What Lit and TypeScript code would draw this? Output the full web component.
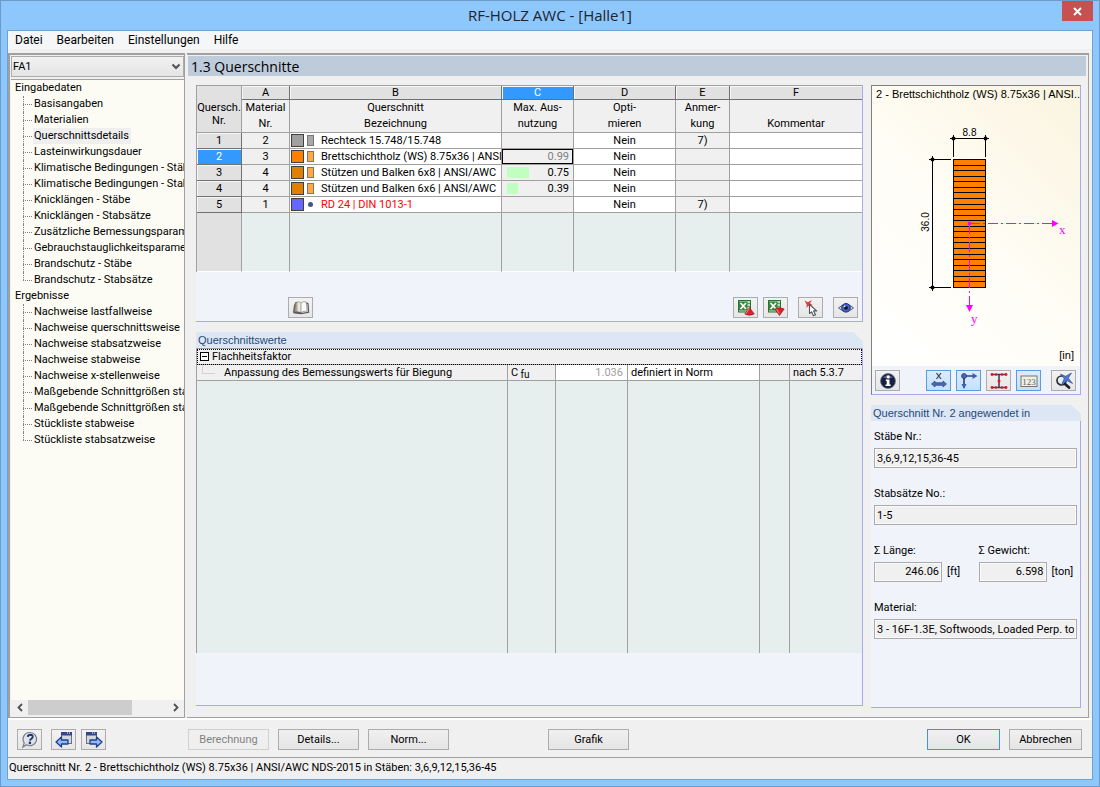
import { LitElement, html, css, svg, nothing } from "lit";
import { customElement, state } from "lit/decorators.js";
import { classMap } from "lit/directives/class-map.js";
import { styleMap } from "lit/directives/style-map.js";

const MENU = ["Datei", "Bearbeiten", "Einstellungen", "Hilfe"];

const TREE = [
  {
    title: "Eingabedaten",
    items: [
      "Basisangaben",
      "Materialien",
      "Querschnittsdetails",
      "Lasteinwirkungsdauer",
      "Klimatische Bedingungen - Stäbe",
      "Klimatische Bedingungen - Stabsätze",
      "Knicklängen - Stäbe",
      "Knicklängen - Stabsätze",
      "Zusätzliche Bemessungsparameter",
      "Gebrauchstauglichkeitsparameter",
      "Brandschutz - Stäbe",
      "Brandschutz - Stabsätze",
    ],
  },
  {
    title: "Ergebnisse",
    items: [
      "Nachweise lastfallweise",
      "Nachweise querschnittsweise",
      "Nachweise stabsatzweise",
      "Nachweise stabweise",
      "Nachweise x-stellenweise",
      "Maßgebende Schnittgrößen stabweise",
      "Maßgebende Schnittgrößen stabsatzweise",
      "Stückliste stabweise",
      "Stückliste stabsatzweise",
    ],
  },
];

const COLUMNS = [
  { letter: "A", lines: ["Material", "Nr."] },
  { letter: "B", lines: ["Querschnitt", "Bezeichnung"] },
  { letter: "C", lines: ["Max. Aus-", "nutzung"] },
  { letter: "D", lines: ["Opti-", "mieren"] },
  { letter: "E", lines: ["Anmer-", "kung"] },
  { letter: "F", lines: ["", "Kommentar"] },
];

interface Section {
  material: number;
  color: string;
  shape: "grey" | "wood" | "round";
  name: string;
  ratio?: number;
  note?: string;
  invalid?: boolean;
}

const SECTIONS: Section[] = [
  { material: 2, color: "#a0a0a0", shape: "grey", name: "Rechteck 15.748/15.748", note: "7)" },
  { material: 3, color: "#ff8000", shape: "wood", name: "Brettschichtholz (WS) 8.75x36 | ANSI", ratio: 0.99 },
  { material: 4, color: "#e08000", shape: "wood", name: "Stützen und Balken 6x8 | ANSI/AWC", ratio: 0.75 },
  { material: 4, color: "#e08000", shape: "wood", name: "Stützen und Balken 6x6 | ANSI/AWC", ratio: 0.39 },
  { material: 1, color: "#6666ff", shape: "round", name: "RD 24 | DIN 1013-1", note: "7)", invalid: true },
];

const icon = (body: unknown) => html`<svg class="icon" width="18" height="18" viewBox="0 0 18 18" aria-hidden="true">${body}</svg>`;

const sheet = svg`<rect x="1.500" y="1.500" width="12" height="11.500" fill="#b9dcb4" stroke="#2f6f33"/>
  <path d="M9 4.500h4M9 7.500h4M9 10.500h4" stroke="#5f9a63"/>
  <rect x="2" y="2.500" width="8.500" height="9" fill="#3a8442"/>
  <path d="M3.500 4l5.500 6M9 4l-5.500 6" stroke="#fff" stroke-width="1.700"/>`;

const ICONS = {
  book: icon(svg`<path d="M2 6l1.500-3 4.500 0 1.500 1.500v10l-7.500-.5-1-1z" fill="#6d6558"/>
    <path d="M3.500 4c1.700-1.500 4-1.500 5.300.3v9c-1.600-1-4-1-6-.3z" fill="#a9a49a" stroke="#77705f" stroke-width=".6"/>
    <path d="M5.500 3.500c1.300-.6 2.600-.2 3.400.8v9c-1-.7-2-1-3.400-.9z" fill="#e9e7e0"/>
    <path d="M9 4.300c1.500-1.800 3.500-2 5.300-1.200l.8 9.300c-2-.4-4.300 0-6.100 1.100z" fill="#fbfaf6" stroke="#8b8477" stroke-width=".7"/>
    <path d="M14.700 3.800l1.300 1 .6 8.500-7.600 1.400-7.500-1" fill="none" stroke="#4c5668" stroke-width="1.200"/>`),
  excelUp: icon(svg`${sheet}<path d="M12.500 8.500l4.700 6.500q-4.700 2.600-9.400 0z" fill="#e0202a" stroke="#8e0e14" stroke-width=".6"/>
    <path d="M12.300 9.500l-3.300 5" stroke="#ff8a8a"/>`),
  excelDown: icon(svg`${sheet}<path d="M7.800 10q4.700-2.600 9.400 0l-4.700 6.500z" fill="#e0202a" stroke="#8e0e14" stroke-width=".6"/>
    <path d="M9.500 10.200l2.800 4.200" stroke="#ff8a8a"/>`),
  pick: icon(svg`<path d="M2.500 1.500l3.300 1.800L10 1 8 4.300l2.800 2-3.800.2L4.500 8.800l.2-3z" fill="#e23a3a"/>
    <path d="M7.500 5.500v9l2-1.700 1.900 4 2.100-1-1.900-3.900h3.100z" fill="#fdfdfd" stroke="#50555c" stroke-width="1.100" stroke-linejoin="round"/>`),
  eye: icon(svg`<path d="M1.500 9Q9 1.500 16.500 9 9 16 1.500 9z" fill="#c9d1ea" stroke="#59617c"/>
    <circle cx="9" cy="8.800" r="4.300" fill="#4664c4" stroke="#1f2f73"/>
    <circle cx="9" cy="8.800" r="1.900" fill="#0c1230"/><circle cx="7.600" cy="7.300" r=".9" fill="#e9eeff"/>`),
  info: icon(svg`<circle cx="9" cy="9" r="7.500" fill="#17203f" stroke="#6b7696" stroke-width=".8"/>
    <path d="M4 5.500q5-4.500 10 0-5 2-10 0z" fill="#7d8bb8" opacity=".6"/>
    <circle cx="9.200" cy="4.900" r="1.600" fill="#fff"/><path d="M6.800 7.500h3.700v5h1.200v1.500H6.500v-1.500h1.200V9h-.9z" fill="#fff"/>`),
  width: icon(svg`<path d="M6.500 1l4.500 6M11 1L6.500 7" stroke="#333b4d" stroke-width="1.200"/>
    <path d="M1.500 12l3.500-3v1.700h8V9l3.500 3-3.500 3v-1.700H5V15z" fill="#4a68b8" stroke="#2b3f7c" stroke-width=".7"/>`),
  axes: icon(svg`<path d="M4 16V4h11" fill="none" stroke="#2e4481" stroke-width="1.700"/>
    <path d="M12.500 1L17.500 4l-5 3zM1.500 12h5L4 17z" fill="#3f5fae"/><circle cx="4" cy="4" r="2.500" fill="#4a68b8" stroke="#22346b" stroke-width=".7"/>`),
  beam: icon(svg`<path d="M2 2.500h14M2 15.500h14M9 2.500v13" stroke="#34395e" stroke-width="1.500"/>
    <g fill="#e8141c"><circle cx="2" cy="2.500" r="1.400"/><circle cx="6" cy="2.500" r="1.200"/><circle cx="12" cy="2.500" r="1.200"/><circle cx="16" cy="2.500" r="1.400"/>
    <circle cx="9" cy="9" r="1.500"/><circle cx="2" cy="15.500" r="1.400"/><circle cx="6" cy="15.500" r="1.200"/><circle cx="12" cy="15.500" r="1.200"/><circle cx="16" cy="15.500" r="1.400"/></g>`),
  numbers: icon(svg`<rect x="1" y="4" width="16" height="10.500" fill="#eef0e6" stroke="#73786f"/>
    <text x="9" y="12.500" text-anchor="middle" font-family="Liberation Serif, serif" font-size="9" fill="#5c6158">123</text>`),
  findView: icon(svg`<circle cx="6.500" cy="8.500" r="4.500" fill="#e8eef5" stroke="#2c3138" stroke-width="1.700"/>
    <path d="M10 12l4 3.500" stroke="#1d2026" stroke-width="2.800" stroke-linecap="round"/>
    <path d="M5.500 2l5 2.300L16.500 1 13.300 6l4.200 5.500-5.500-2.800-5.500 4 2.700-6z" fill="#4f79cf" stroke="#28478f" stroke-width=".6"/>`),
  help: icon(svg`<path d="M9 1.500a6.600 6.600 0 1 1-3.500 12.200L2 16l1.200-4.200A6.600 6.600 0 0 1 9 1.500z" fill="#dfe2e8" stroke="#777c84" stroke-width="1.200"/>
    <path d="M6.800 5.800q.3-2 2.700-2 2.300.1 2.200 2.100-.2 1.300-1.600 2.100-.9.500-1 1.700" fill="none" stroke="#27366f" stroke-width="2"/><circle cx="8.900" cy="11.900" r="1.300" fill="#27366f"/>`),
  back: icon(svg`<rect x="6.500" y="1.500" width="10" height="11" fill="#d3d8e0" stroke="#6c727c"/><rect x="6" y="1" width="11" height="3.500" fill="#35458a"/>
    <path d="M12 2h4" stroke="#fff" stroke-dasharray="1 1"/>
    <path d="M1 11l5.500-5v3h6.500v4H6.500v3z" fill="#8fb9f0" stroke="#1e3f8f" stroke-width="1.300" stroke-linejoin="round"/>`),
  forward: icon(svg`<rect x="1.500" y="1.500" width="10" height="11" fill="#d3d8e0" stroke="#6c727c"/><rect x="1" y="1" width="11" height="3.500" fill="#35458a"/>
    <path d="M7 2h4" stroke="#fff" stroke-dasharray="1 1"/>
    <path d="M17 11l-5.500-5v3H5v4h6.500v3z" fill="#8fb9f0" stroke="#1e3f8f" stroke-width="1.300" stroke-linejoin="round"/>`),
};

const LAYERS = 23;

@customElement("section-preview")
export class SectionPreview extends LitElement {
  static styles = css`
    :host {
      display: block;
      position: relative;
      height: 280px;
      overflow: hidden;
      background: linear-gradient(225deg, #faf4df 0%, #fffdf6 55%, #ffffff 100%);
    }
    svg {
      display: block;
      font-family: "Liberation Sans", Arial, sans-serif;
    }
    .caption {
      position: absolute;
      top: 0;
      left: 4px;
      white-space: nowrap;
      font: 11px/16px "Liberation Sans", Arial, sans-serif;
      color: #000;
    }
    .dim {
      stroke: #000;
      fill: none;
      shape-rendering: crispEdges;
    }
    .value {
      font-size: 10px;
      text-anchor: middle;
    }
    .axis {
      stroke: #f0f;
      fill: none;
      stroke-dasharray: 10 3 2 3;
      shape-rendering: crispEdges;
    }
    .axis-name {
      font: 13px "Liberation Serif", serif;
      fill: #f0f;
    }
    .unit {
      font-size: 11px;
    }
  `;

  render() {
    const step = 128 / LAYERS;
    return html`
      <div class="caption">2 - Brettschichtholz (WS) 8.75x36 | ANSI...</div>
      <svg width="208" height="280" viewBox="0 0 208 280" role="img" aria-label="Querschnitt 8.8 x 36.0 in">
        <rect x="81.500" y="73.500" width="32" height="128" fill="#ff8000" stroke="#000" shape-rendering="crispEdges" />
        ${Array.from({ length: LAYERS - 1 }, (_, i) => {
          const y = Math.round(73 + step * (i + 1)) + 0.5;
          return svg`<path class="dim" d="M81 ${y}h33" />`;
        })}
        <path class="dim" d="M78 52.500h39M81.500 49v22M113.500 49v22" />
        <path class="dim" d="M60.500 70v135M57 73.500h22M57 201.500h22" />
        <g fill="#000">
          <circle cx="81.500" cy="52.500" r="2" /><circle cx="113.500" cy="52.500" r="2" />
          <circle cx="60.500" cy="73.500" r="2" /><circle cx="60.500" cy="201.500" r="2" />
        </g>
        <text class="value" x="97.500" y="50">8.8</text>
        <text class="value" transform="translate(57 136) rotate(-90)">36.0</text>
        <path class="axis" d="M97.500 137.500h84" />
        <path class="axis" d="M97.500 137.500v81" />
        <rect x="96" y="136" width="3" height="3" fill="#f0f" />
        <path d="M180 134l6.500 3.500-6.500 3.500z" fill="#f0f" />
        <path d="M94 219h7l-3.500 7z" fill="#f0f" />
        <text class="axis-name" x="187" y="148">x</text>
        <text class="axis-name" x="99" y="237">y</text>
        <text class="unit" x="202" y="273" text-anchor="end">[in]</text>
      </svg>
    `;
  }
}

@customElement("app-root")
export class AppRoot extends LitElement {
  @state() private selected = 1;
  @state() private page = "Querschnittsdetails";

  static styles = css`
    :host {
      --ui: Roboto, "Liberation Sans", sans-serif;
      --plain: "Liberation Sans", Arial, sans-serif;
      --shell: "Open Sans", "Noto Sans", sans-serif;
      --line: #a0a0a0;
      --face: #f0f0f0;
      --panel: #f0f3fa;
      --edge: #a8a8ee;
      display: flex;
      flex-direction: column;
      box-sizing: border-box;
      height: 100vh;
      border: 1px solid #6c9bc8;
      padding: 0 6px 6px;
      background: #8dc7fb;
      color: #000;
      font: 11px/16px var(--ui);
    }
    * {
      box-sizing: border-box;
    }
    button,
    select,
    input {
      font: inherit;
      color: inherit;
      margin: 0;
      border-radius: 0;
    }
    .titlebar {
      position: relative;
      flex: none;
      height: 29px;
      text-align: center;
      font: 15px/29px var(--shell);
      color: #1c2430;
    }
    .close {
      position: absolute;
      top: 0;
      right: 0;
      width: 31px;
      height: 20px;
      padding: 0;
      border: 0;
      background: #c75050;
      display: grid;
      place-items: center;
    }
    .client {
      flex: 1;
      min-height: 0;
      display: flex;
      flex-direction: column;
      border: 1px solid #6fa3d3;
      background: var(--face);
    }
    .menu {
      flex: none;
      display: flex;
      gap: 14px;
      height: 22px;
      padding: 0 7px;
      background: #f5f6f7;
      border-bottom: 4px solid var(--face);
      font: 12px/19px var(--ui);
    }
    .menu button {
      padding: 0;
      border: 0;
      background: none;
    }
    .workspace {
      flex: 1;
      min-height: 0;
      display: flex;
      gap: 2px;
      padding-right: 3px;
    }

    /* Navigator */
    .navigator {
      flex: none;
      width: 177px;
      display: flex;
      flex-direction: column;
      padding: 1px 0 0 1px;
      border: 1px solid var(--line);
      border-width: 2px 1px 1px 2px;
      background: var(--face);
    }
    .case {
      position: relative;
      flex: none;
      height: 24px;
      border-bottom: 1px solid var(--line);
    }
    .case select {
      appearance: none;
      width: 100%;
      height: 21px;
      padding: 0 1px;
      border: 1px solid #acacac;
      background: linear-gradient(#f2f2f2, #e4e4e4);
    }
    .case svg {
      position: absolute;
      right: 3px;
      top: 7px;
      pointer-events: none;
    }
    .tree {
      flex: 1;
      min-height: 0;
      overflow: hidden;
      background: #fcfcf4;
      white-space: nowrap;
    }
    .tree ul {
      list-style: none;
      margin: 0;
      padding: 0;
    }
    .root {
      padding-left: 4px;
    }
    .branch {
      position: relative;
      padding-left: 22px;
    }
    .branch::before {
      content: "";
      position: absolute;
      left: 12px;
      top: 0;
      height: 16px;
      border-left: 1px dotted #808080;
    }
    .branch:last-child::before {
      height: 8px;
    }
    .branch::after {
      content: "";
      position: absolute;
      left: 12px;
      top: 8px;
      width: 9px;
      border-top: 1px dotted #808080;
    }
    .branch a {
      display: inline-block;
      padding: 0 2px 0 1px;
      color: inherit;
      text-decoration: none;
    }
    .branch .current {
      background: #efefef;
    }
    .scroll {
      flex: none;
      display: flex;
      align-items: flex-start;
      height: 17px;
      background: var(--face);
    }
    .scroll .step {
      width: 17px;
      height: 15px;
      padding: 0;
      border: 0;
      background: none;
      display: grid;
      place-items: center;
    }
    .scroll .track {
      flex: 1;
      height: 15px;
    }
    .scroll .thumb {
      width: 75%;
      height: 15px;
      background: #cdcdcd;
    }

    /* Main area */
    .main {
      flex: 1;
      min-width: 0;
      display: flex;
      flex-direction: column;
      border-top: 2px solid var(--line);
      border-right: 1px solid var(--line);
      border-bottom: 1px solid var(--line);
    }
    .main h1 {
      flex: none;
      margin: 1px 2px 0 1px;
      height: 20px;
      padding-left: 3px;
      background: #becbda;
      font: 14px/21px var(--shell);
    }
    .split {
      flex: 1;
      min-height: 0;
      display: flex;
      gap: 8px;
      padding: 9px 7px 9px 9px;
    }
    .column {
      display: flex;
      flex-direction: column;
      gap: 10px;
    }
    .wide {
      flex: 1;
      min-width: 0;
      padding-bottom: 2px;
    }
    .side {
      flex: none;
      width: 210px;
    }
    .panel {
      display: flex;
      flex-direction: column;
      border-right: 1px solid var(--edge);
      border-bottom: 1px solid var(--edge);
      background: var(--panel);
    }
    .grow {
      flex: 1;
      min-height: 0;
    }
    .panel h2 {
      flex: none;
      margin: 0 -1px 0 0;
      height: 16px;
      padding-left: 2px;
      background: linear-gradient(45deg, #dde6f4 calc(100% - 7px), var(--face) calc(100% - 7px));
      color: #1f4a78;
      font: 11px/16px var(--plain);
    }

    table {
      width: 100%;
      table-layout: fixed;
      border-collapse: separate;
      border-spacing: 0;
      border-left: 1px solid var(--line);
      border-top: 1px solid var(--line);
    }
    th,
    td {
      height: 16px;
      padding: 0;
      border-right: 1px solid var(--line);
      border-bottom: 1px solid var(--line);
      background: var(--face);
      font-weight: normal;
      line-height: 15px;
      text-align: center;
      white-space: nowrap;
      overflow: hidden;
    }
    th:last-child,
    td:last-child {
      border-right: 0;
    }
    .letter {
      height: 14px;
      line-height: 13px;
      background: #e1e1e1;
      border-color: #707070;
      box-shadow: inset 1px 1px #f7f7f7;
    }
    .corner {
      background: #e1e1e1;
      line-height: 13px;
      padding-top: 9px;
    }
    .label {
      height: 33px;
      line-height: 16px;
    }
    .label span {
      display: block;
      min-height: 16px;
    }
    .number {
      background: #e1e1e1;
      border-color: #707070;
      box-shadow: inset 1px 1px #f7f7f7;
      cursor: pointer;
    }
    .letter.on,
    .number.on {
      background: #3399ff;
      color: #fff;
    }
    .open {
      background: #fff;
    }
    .section {
      background: #fff;
      text-align: left;
    }
    .section-inner {
      display: flex;
      align-items: center;
      height: 15px;
      padding-left: 1px;
    }
    .swatch {
      flex: none;
      width: 13px;
      height: 13px;
      border: 1px solid #404040;
    }
    .glyph {
      flex: none;
      width: 17px;
      height: 15px;
    }
    .invalid {
      color: #f00;
    }
    .ratio {
      text-align: right;
    }
    .ratio-inner {
      display: flex;
      align-items: center;
      height: 15px;
      padding: 0 4px 0 5px;
    }
    .bar {
      height: 11px;
      background: #c0ffc0;
    }
    .ratio-inner span:last-child {
      margin-left: auto;
    }
    .focus .ratio-inner {
      outline: 1px solid #000;
      outline-offset: -1px;
      color: #808080;
    }
    .filler td {
      height: 59px;
      background: #e7eeee;
      border-bottom-color: #fff;
    }
    .filler .stub {
      background: #e1e1e1;
    }
    .tools {
      flex: none;
      display: flex;
      align-items: flex-start;
      height: 49px;
      padding: 25px 4px 0 92px;
    }
    .tool {
      flex: none;
      width: 25px;
      height: 21px;
      padding: 0;
      border: 1px solid #acacac;
      background: linear-gradient(#f2f2f2, #e6e6e6);
      display: grid;
      place-items: center;
    }
    .tool.pressed {
      border-color: #569de5;
      background: linear-gradient(#dcecfc, #c4e0fc);
    }
    .icon {
      display: block;
    }
    .push {
      margin-left: auto;
    }
    .gap-s {
      margin-left: 5px;
    }
    .gap-m {
      margin-left: 10px;
    }

    /* Property grid */
    .property-box {
      flex: 1;
      min-height: 0;
      display: flex;
      padding-bottom: 52px;
    }
    .group {
      text-align: left;
      padding-left: 3px;
      outline: 1px dotted #000;
      outline-offset: -1px;
    }
    .group-inner {
      display: flex;
      align-items: center;
      gap: 3px;
      height: 15px;
    }
    .left {
      text-align: left;
      padding-left: 3px;
    }
    .named {
      display: flex;
      gap: 9px;
      height: 15px;
      padding-left: 5px;
      text-align: left;
    }
    .named::before {
      content: "";
      width: 12px;
      height: 8px;
      border-left: 1px solid #d4d4d4;
      border-bottom: 1px solid #d4d4d4;
    }
    sub {
      font-size: 10px;
      line-height: 1px;
      vertical-align: -2px;
    }
    .muted {
      color: #a0a0a0;
      text-align: right;
      padding-right: 4px;
    }
    .rest td {
      height: auto;
      background: #e7eeee;
      border-bottom: 0;
    }

    /* Side column */
    .preview {
      border-top: 1px solid #808080;
      border-left: 1px solid #808080;
    }
    .preview-tools {
      display: flex;
      height: 28px;
      padding: 4px 4px 0 3px;
    }
    .form {
      display: flex;
      flex-direction: column;
      gap: 18px;
      padding: 8px 3px 0 3px;
    }
    .field {
      display: flex;
      flex-direction: column;
      gap: 3px;
    }
    .pair {
      display: grid;
      grid-template-columns: 1fr 1fr;
      gap: 6px;
    }
    .with-unit {
      display: flex;
      gap: 5px;
      line-height: 20px;
    }
    .field input {
      width: 100%;
      height: 20px;
      padding: 0 2px;
      border: 1px solid #ababab;
      background: var(--face);
      box-shadow: inset 0 0 0 1px #fafafa;
      outline: 0;
    }
    .with-unit input {
      width: 68px;
      text-align: right;
    }

    /* Command row and status line */
    .commands {
      flex: none;
      display: flex;
      align-items: center;
      height: 39px;
      padding: 2px 10px 0 9px;
      border-top: 2px solid #fff;
    }
    .command {
      width: 81px;
      height: 21px;
      padding: 0;
      border: 1px solid #acacac;
      background: linear-gradient(#f0f0f0, #e5e5e5);
      margin-left: 9px;
    }
    .command:disabled {
      border-color: #d0d0d0;
      background: #efefef;
      color: #838383;
    }
    .command.first {
      margin-left: 82px;
    }
    .command.apart {
      margin-left: 99px;
    }
    .command.narrow {
      width: 73px;
    }
    .command.default {
      margin-left: auto;
      border-color: #3c94ee;
    }
    .help {
      margin-right: 9px;
    }
    .status {
      flex: none;
      height: 22px;
      padding-left: 1px;
      border-top: 1px solid var(--line);
      line-height: 20px;
      white-space: nowrap;
      overflow: hidden;
    }
  `;

  private renderNavigator() {
    return html`
      <nav class="navigator" aria-label="Navigator">
        <div class="case">
          <select aria-label="Bemessungsfall"><option>FA1</option></select>
          <svg width="10" height="8" viewBox="0 0 10 8" aria-hidden="true">
            <path d="M1.500 1.500L5 5l3.500-3.500" fill="none" stroke="#505050" stroke-width="2" />
          </svg>
        </div>
        <div class="tree">
          ${TREE.map(
            (group) => html`
              <div class="root">${group.title}</div>
              <ul>
                ${group.items.map(
                  (item) => html`<li class="branch">
                    <a href="#" class=${classMap({ current: item === this.page })} @click=${(e: Event) => this.open(e, item)}>${item}</a>
                  </li>`
                )}
              </ul>
            `
          )}
        </div>
        <div class="scroll">
          <button class="step" aria-label="Nach links">
            <svg width="6" height="9" viewBox="0 0 6 9"><path d="M5 1L1.500 4.500 5 8" fill="none" stroke="#505050" stroke-width="1.800" /></svg>
          </button>
          <div class="track"><div class="thumb"></div></div>
          <button class="step" aria-label="Nach rechts">
            <svg width="6" height="9" viewBox="0 0 6 9"><path d="M1 1l3.500 3.500L1 8" fill="none" stroke="#505050" stroke-width="1.800" /></svg>
          </button>
        </div>
      </nav>
    `;
  }

  private open(event: Event, item: string) {
    event.preventDefault();
    this.page = item;
  }

  private renderGlyph(shape: Section["shape"]) {
    const body =
      shape === "round"
        ? svg`<circle cx="6.500" cy="7.500" r="2.500" fill="#44558a" />`
        : svg`<rect x="3.500" y="2.500" width="6" height="10" fill=${shape === "grey" ? "#a8a8a8" : "#ffaa40"} stroke="#777" />`;
    return html`<svg class="glyph" viewBox="0 0 17 15" aria-hidden="true">${body}</svg>`;
  }

  private renderSections() {
    return html`
      <table>
        <colgroup>
          <col style="width:45px" /><col style="width:48px" /><col style="width:212px" /><col style="width:72px" />
          <col style="width:102px" /><col style="width:54px" /><col />
        </colgroup>
        <thead>
          <tr>
            <th class="corner" rowspan="2">Quersch.<br />Nr.</th>
            ${COLUMNS.map((c) => html`<th class=${classMap({ letter: true, on: c.letter === "C" })}>${c.letter}</th>`)}
          </tr>
          <tr>
            ${COLUMNS.map((c) => html`<th class="label">${c.lines.map((l) => html`<span>${l}</span>`)}</th>`)}
          </tr>
        </thead>
        <tbody>
          ${SECTIONS.map((s, i) => {
            const on = i === this.selected;
            return html`<tr>
              <th class=${classMap({ number: true, on })} @click=${() => (this.selected = i)}>${i + 1}</th>
              <td>${s.material}</td>
              <td class="section">
                <div class="section-inner">
                  <span class="swatch" style=${styleMap({ background: s.color })}></span>
                  ${this.renderGlyph(s.shape)}
                  <span class=${classMap({ invalid: !!s.invalid })}>${s.name}</span>
                </div>
              </td>
              <td class=${classMap({ ratio: true, focus: on })}>
                <div class="ratio-inner">
                  ${s.ratio !== undefined && !on
                    ? html`<span class="bar" style=${styleMap({ width: `${Math.round(s.ratio * 29)}px` })}></span>`
                    : nothing}
                  <span>${s.ratio ?? ""}</span>
                </div>
              </td>
              <td class="open">Nein</td>
              <td>${s.note ?? ""}</td>
              <td class="open"></td>
            </tr>`;
          })}
          <tr class="filler">
            <td class="stub"></td>
            ${COLUMNS.map(() => html`<td></td>`)}
          </tr>
        </tbody>
      </table>
    `;
  }

  private renderProperties() {
    return html`
      <div class="property-box">
        <table>
          <colgroup>
            <col /><col style="width:48px" /><col style="width:72px" /><col style="width:132px" />
            <col style="width:30px" /><col style="width:72px" />
          </colgroup>
          <tbody>
            <tr>
              <th class="group" colspan="6">
                <div class="group-inner">
                  <svg width="9" height="9" viewBox="0 0 9 9" shape-rendering="crispEdges" aria-hidden="true">
                    <rect x=".5" y=".5" width="8" height="8" fill="#fff" stroke="#000" />
                    <path d="M2 4.500h5" stroke="#000" />
                  </svg>
                  Flachheitsfaktor
                </div>
              </th>
            </tr>
            <tr>
              <td><div class="named">Anpassung des Bemessungswerts für Biegung</div></td>
              <td class="left">C<sub> fu</sub></td>
              <td class="open muted">1.036</td>
              <td class="open left">definiert in Norm</td>
              <td></td>
              <td class="left">nach 5.3.7</td>
            </tr>
            <tr class="rest">
              ${[0, 1, 2, 3, 4, 5].map(() => html`<td></td>`)}
            </tr>
          </tbody>
        </table>
      </div>
    `;
  }

  private tool(name: keyof typeof ICONS, label: string, extra = "") {
    return html`<button class="tool ${extra}" aria-label=${label}>${ICONS[name]}</button>`;
  }

  render() {
    return html`
      <header class="titlebar">
        RF-HOLZ AWC - [Halle1]
        <button class="close" aria-label="Schließen">
          <svg width="9" height="9" viewBox="0 0 9 9"><path d="M1 1l7 7M8 1L1 8" stroke="#fff" stroke-width="2" /></svg>
        </button>
      </header>
      <div class="client">
        <div class="menu">${MENU.map((m) => html`<button>${m}</button>`)}</div>
        <div class="workspace">
          ${this.renderNavigator()}
          <main class="main">
            <h1>1.3 Querschnitte</h1>
            <div class="split">
              <div class="column wide">
                <section class="panel">
                  ${this.renderSections()}
                  <div class="tools">
                    ${this.tool("book", "Bibliothek")} ${this.tool("excelUp", "Nach Excel exportieren", "push")}
                    ${this.tool("excelDown", "Aus Excel importieren", "gap-s")} ${this.tool("pick", "Auswählen", "gap-m")}
                    ${this.tool("eye", "Ansicht", "gap-m")}
                  </div>
                </section>
                <section class="panel grow">
                  <h2>Querschnittswerte</h2>
                  ${this.renderProperties()}
                </section>
              </div>
              <div class="column side">
                <section class="panel preview">
                  <section-preview></section-preview>
                  <div class="preview-tools">
                    ${this.tool("info", "Info")} ${this.tool("width", "Abmessungen", "push pressed")}
                    ${this.tool("axes", "Achsen", "gap-s pressed")} ${this.tool("beam", "Spannungspunkte", "gap-s")}
                    ${this.tool("numbers", "Nummerierung", "gap-s pressed")} ${this.tool("findView", "Ansicht zurücksetzen", "gap-m")}
                  </div>
                </section>
                <section class="panel grow">
                  <h2>Querschnitt Nr. 2 angewendet in</h2>
                  <div class="form">
                    <div class="field">
                      <label for="members">Stäbe Nr.:</label>
                      <input id="members" readonly value="3,6,9,12,15,36-45" />
                    </div>
                    <div class="field">
                      <label for="sets">Stabsätze No.:</label>
                      <input id="sets" readonly value="1-5" />
                    </div>
                    <div class="pair">
                      <div class="field">
                        <label for="length">Σ Länge:</label>
                        <div class="with-unit"><input id="length" readonly value="246.06" /><span>[ft]</span></div>
                      </div>
                      <div class="field">
                        <label for="weight">Σ Gewicht:</label>
                        <div class="with-unit"><input id="weight" readonly value="6.598" /><span>[ton]</span></div>
                      </div>
                    </div>
                    <div class="field">
                      <label for="material">Material:</label>
                      <input id="material" readonly value="3 - 16F-1.3E, Softwoods, Loaded Perp. to" />
                    </div>
                  </div>
                </section>
              </div>
            </div>
          </main>
        </div>
        <footer class="commands">
          ${this.tool("help", "Hilfe", "help")} ${this.tool("back", "Vorherige Maske")} ${this.tool("forward", "Nächste Maske", "gap-s")}
          <button class="command first" disabled>Berechnung</button>
          <button class="command">Details...</button>
          <button class="command">Norm...</button>
          <button class="command apart">Grafik</button>
          <button class="command narrow default">OK</button>
          <button class="command narrow">Abbrechen</button>
        </footer>
        <div class="status">
          Querschnitt Nr. 2 - Brettschichtholz (WS) 8.75x36 | ANSI/AWC NDS-2015 in Stäben: 3,6,9,12,15,36-45
        </div>
      </div>
    `;
  }
}
